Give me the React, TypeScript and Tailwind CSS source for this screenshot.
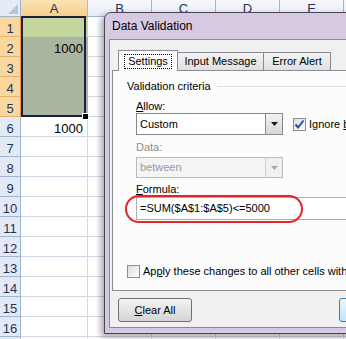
import React from 'react';

const cols = ['A', 'B', 'C', 'D', 'E', 'F'];
const rows = Array.from({ length: 17 }, (_, i) => i + 1);

function Sheet() {
  return (
    <div className="relative w-max">
      <div className="grid w-max grid-cols-[21px_67px_64px_64px_64px_64px_64px] grid-rows-[17px_repeat(17,20px)] font-['Liberation_Sans',Arial,sans-serif] text-[13px] leading-[13px] text-[#1f3358]">
        <div className="relative border-r border-b border-[#9eb6ce] bg-[#e4ecf7]">
          <svg className="absolute right-[2px] bottom-[2px]" width="10" height="10" viewBox="0 0 10 10">
            <polygon points="10,0 10,10 0,10" fill="#b4c5dc" />
          </svg>
        </div>
        {cols.map((c) => (
          <div
            key={c}
            className={
              c === 'A'
                ? 'flex items-end justify-center pb-[1px] border-r border-b border-r-[#e3b066] border-b-[#f29536] bg-gradient-to-b from-[#fbe2b4] to-[#f7cf8c]'
                : 'flex items-end justify-center pb-[1px] border-r border-b border-[#9eb6ce] bg-gradient-to-b from-[#f7f9fc] to-[#e4ebf5]'
            }
          >
            {c}
          </div>
        ))}
        {rows.map((r) => (
          <React.Fragment key={r}>
            <div
              className={
                r <= 5
                  ? 'flex items-end justify-center pb-[1px] border-r border-b border-r-[#f29536] border-b-[#e8b36b] bg-[#f9d8a0]'
                  : 'flex items-end justify-center pb-[1px] border-r border-b border-[#9eb6ce] bg-[#e4eaf5]'
              }
            >
              {r}
            </div>
            {cols.map((c) => {
              let cls = 'border-r border-b border-[#d0d7e5] bg-white';
              if (c === 'A' && r === 1) cls = 'border-r border-b border-[#c4d79f] bg-[#c4d79f]';
              else if (c === 'A' && r <= 5) cls = 'border-r border-b border-[#a9b59e] bg-[#a9b59e]';
              const val = c === 'A' && (r === 2 || r === 6) ? '1000' : '';
              return (
                <div key={c} className={cls + ' flex items-end justify-end pr-[4px] pb-[1px] text-black'}>
                  {val}
                </div>
              );
            })}
          </React.Fragment>
        ))}
      </div>
      {/* selection box A1:A5 */}
      <div className="absolute left-[21px] top-[16px] h-[101px] w-[65px] border-2 border-[#1f1d45]" />
      {/* fill handle */}
      <div className="absolute left-[82px] top-[113px] h-[7px] w-[7px] border border-white bg-black" />
    </div>
  );
}

function Check() {
  return (
    <svg width="11" height="11" viewBox="0 0 11 11">
      <path d="M1.5 5.5 L4 8.5 L9.5 1.5" fill="none" stroke="#2a4ca0" strokeWidth="2" />
    </svg>
  );
}

function Arrow({ color }: { color: string }) {
  return (
    <svg width="7" height="4" viewBox="0 0 7 4">
      <polygon points="0,0 7,0 3.5,4" fill={color} />
    </svg>
  );
}

function Dialog() {
  return (
    <div className="absolute left-[104px] top-[12px] flex h-[322px] w-[300px] flex-col rounded-t-[7px] border border-[#4a4658] bg-[#d6c9e2] pl-[4px] pb-[5px] font-['Liberation_Sans',Arial,sans-serif] text-black shadow-[-3px_3px_6px_rgba(0,0,0,0.35)]">
      <div className="flex h-[26px] items-center pl-[3px] text-[12px] leading-[14px]">Data Validation</div>
      <div className="flex flex-1 flex-col border border-[#8d8898] bg-[#f0f0f0] pl-[2px] pt-[10px] text-[11px] leading-[13px]">
        {/* tabs */}
        <div className="flex h-[20px] items-end pl-[6px]">
          <div className="relative z-10 -mb-px flex h-[21px] w-[60px] justify-center border border-b-0 border-[#898c95] bg-white pt-[3px]">
            <span className="h-[15px] border border-dotted border-black px-[3px]">Settings</span>
          </div>
          <div className="flex h-[18px] w-[86px] justify-center border border-b-0 border-l-0 border-[#898c95] bg-gradient-to-b from-[#f4f4f4] to-[#e0e0e0] pt-[2px]">
            Input Message
          </div>
          <div className="flex h-[18px] w-[67px] justify-center border border-b-0 border-l-0 border-[#898c95] bg-gradient-to-b from-[#f4f4f4] to-[#e0e0e0] pt-[2px]">
            Error Alert
          </div>
        </div>
        {/* panel */}
        <div className="relative flex h-[221px] flex-col border border-[#898c95] bg-[#fcfcfc] pl-[14px]">
          <div className="mt-[9px] flex items-center">
            <span>Validation criteria</span>
            <div className="ml-[6px] h-px flex-1 bg-[#d5dfe5]" />
          </div>
          <div className="flex flex-col pl-[9px]">
            <div className="mt-[7px]">
              <span className="underline">A</span>llow:
            </div>
            <div className="flex h-[22px] items-center">
              <div className="flex h-[22px] w-[147px] shrink-0 items-center border border-[#828790] bg-white pl-[3px]">
                <span className="flex-1">Custom</span>
                <div className="flex h-[20px] w-[17px] items-center justify-center border-l border-[#8a8a8a] bg-gradient-to-b from-[#f3f3f3] to-[#d6d6d6]">
                  <Arrow color="#1a1a1a" />
                </div>
              </div>
              <div className="ml-[10px] flex h-[13px] w-[13px] shrink-0 items-center justify-center border border-[#8e8f8f] bg-gradient-to-br from-[#dcdcdc] to-white">
                <Check />
              </div>
              <span className="ml-[3px] whitespace-nowrap">
                Ignore <span className="underline">b</span>lank
              </span>
            </div>
            <div className="mt-[6px] text-[#8d8d8d]">Data:</div>
            <div className="mt-[3px] flex h-[21px] w-[147px] items-center border border-[#b8bcc2] bg-[#f4f4f4] pl-[3px] text-[#9a9a9a]">
              <span className="flex-1">between</span>
              <div className="flex h-[19px] w-[17px] items-center justify-center border-l border-[#cfcfcf] bg-[#f0f0f0]">
                <Arrow color="#a8a8a8" />
              </div>
            </div>
            <div className="mt-[5px]">
              <span className="underline">F</span>ormula:
            </div>
            <div className="mt-[1px] flex h-[23px] items-center border border-[#abadb3] bg-white pl-[3px]">
              =SUM($A$1:$A$5)&lt;=5000
            </div>
          </div>
          <div className="mt-[45px] flex items-center">
            <div className="h-[13px] w-[13px] shrink-0 border border-[#8e8f8f] bg-gradient-to-br from-[#dcdcdc] to-white" />
            <span className="ml-[3px] whitespace-nowrap">
              Ap<span className="underline">p</span>ly these changes to all other cells with the same settings
            </span>
          </div>
          <div className="absolute left-[12px] top-[124px] h-[28px] w-[178px] rounded-full border-2 border-[#e3242b]" />
        </div>
        {/* buttons */}
        <div className="mt-[7px] flex pl-[6px]">
          <div className="flex h-[24px] w-[74px] shrink-0 items-center justify-center rounded-[3px] border border-[#707070] bg-gradient-to-b from-[#f4f4f4] to-[#d4d4d4]">
            <span>
              <span className="underline">C</span>lear All
            </span>
          </div>
          <div className="ml-[147px] flex h-[24px] w-[75px] shrink-0 items-center justify-center rounded-[3px] border border-[#3c7fb1] bg-gradient-to-b from-[#eaf6fd] to-[#bee6fd]">
            OK
          </div>
        </div>
      </div>
    </div>
  );
}

export default function App() {
  return (
    <div className="relative h-[339px] w-[346px] overflow-hidden bg-white">
      <Sheet />
      <Dialog />
    </div>
  );
}
